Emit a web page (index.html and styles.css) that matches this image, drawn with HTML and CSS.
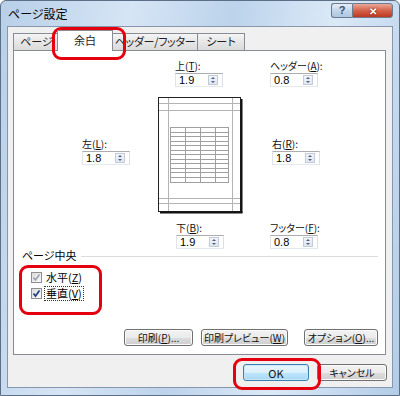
FILE: index.html
```html
<!DOCTYPE html>
<html>
<head>
<meta charset="utf-8">
<link rel="stylesheet" href="styles.css">
</head>
<body>
<div class="window">
  <div class="titlebar">
    <span class="title">ページ設定</span>
    <div class="caption-buttons">
      <span class="cap-btn help">?</span>
      <span class="cap-btn close">✕</span>
    </div>
  </div>

  <div class="client">
    <div class="tabs">
      <div class="tab tab-page">ページ</div>
      <div class="tab tab-active">余白</div>
      <div class="tab tab-header">ヘッダー/フッター</div>
      <div class="tab tab-sheet">シート</div>
    </div>

    <div class="panel">
      <div class="margins">
        <div class="field top-field">
          <div class="field-label">上(<u>T</u>):</div>
          <div class="spin"><span class="spin-val">1.9</span><span class="spin-btn"><i class="arrow-up"></i><i class="arrow-down"></i></span></div>
        </div>
        <div class="field header-field">
          <div class="field-label">ヘッダー(<u>A</u>):</div>
          <div class="spin"><span class="spin-val">0.8</span><span class="spin-btn"><i class="arrow-up"></i><i class="arrow-down"></i></span></div>
        </div>

        <div class="field left-field">
          <div class="field-label">左(<u>L</u>):</div>
          <div class="spin"><span class="spin-val">1.8</span><span class="spin-btn"><i class="arrow-up"></i><i class="arrow-down"></i></span></div>
        </div>
        <div class="preview">
          <svg width="85" height="117" viewBox="0 0 85 117">
            <rect x="0.5" y="0.5" width="82" height="114" fill="#fff" stroke="#222"/>
            <line x1="83.5" y1="2" x2="83.5" y2="116" stroke="#111" stroke-width="2"/>
            <line x1="2" y1="115.5" x2="84.5" y2="115.5" stroke="#111" stroke-width="2"/>
            <g stroke="#b4b4b4" stroke-width="1">
              <line x1="10.5" y1="1" x2="10.5" y2="114"/>
              <line x1="74.5" y1="1" x2="74.5" y2="114"/>
              <line x1="1" y1="6.5" x2="82" y2="6.5"/>
              <line x1="1" y1="13.5" x2="82" y2="13.5"/>
              <line x1="1" y1="101.5" x2="82" y2="101.5"/>
              <line x1="1" y1="106.5" x2="82" y2="106.5"/>
            </g>
            <g stroke="#a0a0a0" stroke-width="1">
              <rect x="12.5" y="30.5" width="58" height="55" fill="none"/>
              <line x1="27.5" y1="30" x2="27.5" y2="86"/>
              <line x1="42.5" y1="30" x2="42.5" y2="86"/>
              <line x1="57.5" y1="30" x2="57.5" y2="86"/>
              <line x1="12" y1="35.5" x2="71" y2="35.5"/>
              <line x1="12" y1="39.5" x2="71" y2="39.5"/>
              <line x1="12" y1="44.5" x2="71" y2="44.5"/>
              <line x1="12" y1="48.5" x2="71" y2="48.5"/>
              <line x1="12" y1="53.5" x2="71" y2="53.5"/>
              <line x1="12" y1="57.5" x2="71" y2="57.5"/>
              <line x1="12" y1="62.5" x2="71" y2="62.5"/>
              <line x1="12" y1="66.5" x2="71" y2="66.5"/>
              <line x1="12" y1="71.5" x2="71" y2="71.5"/>
              <line x1="12" y1="75.5" x2="71" y2="75.5"/>
              <line x1="12" y1="80.5" x2="71" y2="80.5"/>
            </g>
          </svg>
        </div>
        <div class="field right-field">
          <div class="field-label">右(<u>R</u>):</div>
          <div class="spin"><span class="spin-val">1.8</span><span class="spin-btn"><i class="arrow-up"></i><i class="arrow-down"></i></span></div>
        </div>

        <div class="field bottom-field">
          <div class="field-label">下(<u>B</u>):</div>
          <div class="spin"><span class="spin-val">1.9</span><span class="spin-btn"><i class="arrow-up"></i><i class="arrow-down"></i></span></div>
        </div>
        <div class="field footer-field">
          <div class="field-label">フッター(<u>F</u>):</div>
          <div class="spin"><span class="spin-val">0.8</span><span class="spin-btn"><i class="arrow-up"></i><i class="arrow-down"></i></span></div>
        </div>
      </div>

      <div class="group-title"><span>ページ中央</span><div class="group-line"></div></div>
      <div class="checks">
        <div class="check-row">
          <span class="checkbox">
            <svg width="9" height="9" viewBox="0 0 9 9"><path d="M1.5 4.5 L3.5 7 L7.5 1.5" fill="none" stroke="#9aa3ad" stroke-width="1.6"/></svg>
          </span>
          <span class="check-text">水平(<u>Z</u>)</span>
        </div>
        <div class="check-row">
          <span class="checkbox">
            <svg width="9" height="9" viewBox="0 0 9 9"><path d="M1.5 4.5 L3.5 7 L7.5 1.5" fill="none" stroke="#1c3f86" stroke-width="1.7"/></svg>
          </span>
          <span class="check-text focus">垂直(<u>V</u>)</span>
        </div>
      </div>

      <div class="panel-buttons">
        <button class="btn btn-print">印刷(<u>P</u>)...</button>
        <button class="btn btn-preview">印刷プレビュー(<u>W</u>)</button>
        <button class="btn btn-options">オプション(<u>O</u>)...</button>
      </div>
    </div>

    <div class="footer">
      <button class="btn btn-ok">OK</button>
      <button class="btn btn-cancel">キャンセル</button>
    </div>
  </div>

  <div class="highlight hl-tab"></div>
  <div class="highlight hl-checks"></div>
  <div class="highlight hl-ok"></div>
</div>
</body>
</html>
```

FILE: styles.css
```css
body {
  margin: 0;
  font-family: "Noto Sans CJK JP", "Noto Sans", sans-serif;
  font-size: 11px;
  font-feature-settings: "palt";
  color: #000;
  background: #fff;
}

.window {
  position: relative;
  width: 400px;
  height: 396px;
  box-sizing: border-box;
  display: flex;
  flex-direction: column;
  border: 1px solid #5d6f86;
  border-radius: 6px 6px 0 0;
  background: linear-gradient(100deg, #b7cfe8 0%, #d6e5f5 28%, #bcd3eb 50%, #dbe9f7 72%, #b3cce7 100%);
}

.titlebar {
  height: 25px;
  display: flex;
  align-items: flex-start;
  justify-content: space-between;
}

.title {
  font-size: 12px;
  line-height: 12px;
  margin: 7px 0 0 7px;
}

.caption-buttons {
  display: flex;
  margin: 2px 6px 0 0;
}

.cap-btn {
  height: 13px;
  line-height: 13px;
  text-align: center;
  border: 1px solid #6b7b90;
  color: #fff;
  font-weight: bold;
}

.help {
  width: 20px;
  border-radius: 3px 0 0 3px;
  border-right: none;
  color: #3b4f6a;
  font-family: "Liberation Sans", sans-serif;
  font-size: 11px;
  background: linear-gradient(#e5eef8, #c4d6ea 50%, #aec6e0);
}

.close {
  width: 39px;
  border-radius: 0 3px 3px 0;
  font-size: 10px;
  text-shadow: 0 0 2px #5a1408;
  background: linear-gradient(#e9a898, #d3634a 50%, #bf3820);
}

.client {
  flex: 1;
  margin: 0 6px 7px 6px;
  padding: 3px 6px 0 5px;
  display: flex;
  flex-direction: column;
  background: #f0f0f0;
  border: 1px solid #8796aa;
}

.tabs {
  display: flex;
  height: 20px;
}

.tab {
  position: relative;
  box-sizing: border-box;
  height: 17px;
  margin-top: 3px;
  margin-right: -1px;
  border: 1px solid #898c95;
  border-bottom: none;
  text-align: center;
  line-height: 15px;
  white-space: nowrap;
  color: #222;
  background: linear-gradient(#f5f5f5, #e6e6e6 50%, #dadada);
}

.tab-page { width: 47px; }
.tab-header { width: 86px; letter-spacing: -0.3px; }
.tab-sheet { width: 48px; }

.tab-active {
  width: 56px;
  height: 21px;
  margin: 0 -1px 0 -2px;
  line-height: 19px;
  background: #fff;
  z-index: 1;
}

.panel {
  flex: 1;
  display: flex;
  flex-direction: column;
  background: #fff;
  border: 1px solid #898c95;
  padding: 7px 7px 8px 8px;
}

.margins {
  display: grid;
  grid-template-columns: 76px 112px 1fr;
  margin-left: 60px;
}

.field-label {
  font-size: 10px;
  line-height: 15px;
  height: 15px;
  white-space: nowrap;
  color: #111;
}

.spin {
  width: 46px;
  height: 12px;
  border: 1px solid #abadb3;
  border-color: #abadb3 #dbdfe6 #e3e9ef #e2e3ea;
  display: flex;
  justify-content: space-between;
  align-items: center;
  background: #fff;
}

.spin-val {
  font-family: "Liberation Sans", sans-serif;
  font-size: 11px;
  padding-left: 3px;
  line-height: 12px;
}

.spin-btn {
  width: 10px;
  height: 10px;
  margin-right: 4px;
  display: flex;
  flex-direction: column;
  align-items: center;
  justify-content: space-around;
  border: 1px solid #c3ccd8;
  box-sizing: border-box;
  background: linear-gradient(#f2f5f9, #dfe6ee);
}

.arrow-up {
  border-left: 2px solid transparent;
  border-right: 2px solid transparent;
  border-bottom: 2px solid #4d6185;
}

.arrow-down {
  border-left: 2px solid transparent;
  border-right: 2px solid transparent;
  border-top: 2px solid #4d6185;
}

.top-field {
  grid-column: 2;
  padding-left: 17px;
}

.header-field {
  grid-column: 3;
}

.left-field {
  grid-column: 1;
  align-self: center;
}

.preview {
  grid-column: 2;
  margin-top: 10px;
  height: 117px;
}

.preview svg {
  display: block;
}

.right-field {
  grid-column: 3;
  align-self: center;
  padding-left: 2px;
}

.bottom-field {
  grid-column: 2;
  padding-left: 18px;
  margin-top: 6px;
}

.footer-field {
  grid-column: 3;
  margin-top: 6px;
}

.group-title {
  display: flex;
  align-items: center;
  line-height: 13px;
  height: 13px;
}

.group-line {
  flex: 1;
  height: 1px;
  background: #dcdcdc;
  margin: 1px 0 0 4px;
}

.checks {
  margin-top: 7px;
  padding-left: 9px;
}

.check-row {
  display: flex;
  align-items: center;
  height: 16px;
}

.checkbox {
  width: 9px;
  height: 9px;
  border: 1px solid #8f8f8f;
  background: linear-gradient(135deg, #dcdcdc, #fafafa);
  display: flex;
  margin-right: 2px;
}

.check-text {
  line-height: 13px;
  padding: 0 1px;
  border: 1px solid transparent;
}

.check-text.focus {
  border: 1px dotted #333;
}

.panel-buttons {
  margin-top: auto;
  display: flex;
  justify-content: flex-end;
}

.btn {
  font-family: "Noto Sans CJK JP", "Noto Sans", sans-serif;
  font-size: 10px;
  font-feature-settings: "palt";
  white-space: nowrap;
  height: 17px;
  padding: 0;
  line-height: 14px;
  color: #111;
  border: 1px solid #707070;
  border-radius: 3px;
  background: linear-gradient(#f2f2f2, #ebebeb 50%, #dddddd 51%, #cfcfcf);
  box-shadow: inset 0 0 0 1px #fbfbfb;
}

.btn-print { width: 69px; }
.btn-preview { width: 87px; margin-left: 8px; }
.btn-options { width: 74px; margin-left: 16px; }

.footer {
  height: 32px;
  display: flex;
  justify-content: flex-end;
  align-items: flex-start;
  padding-top: 9px;
  box-sizing: border-box;
}

.btn-ok {
  width: 66px;
  font-size: 11px;
  border-color: #3c7fb1;
  box-shadow: inset 0 0 0 1px #c7e8f9;
  background: linear-gradient(#eaf6fd, #d9f0fc 50%, #bee6fd 51%, #a7d9f5);
}

.btn-cancel {
  width: 70px;
  margin-left: 8px;
  margin-right: -1px;
}

.highlight {
  position: absolute;
  border: 3px solid #e4000f;
  border-radius: 9px;
  box-sizing: border-box;
}

.hl-tab {
  left: 51px;
  top: 26px;
  width: 74px;
  height: 33px;
}

.hl-checks {
  left: 18px;
  top: 264px;
  width: 83px;
  height: 50px;
}

.hl-ok {
  left: 232px;
  top: 357px;
  width: 88px;
  height: 32px;
}
```
